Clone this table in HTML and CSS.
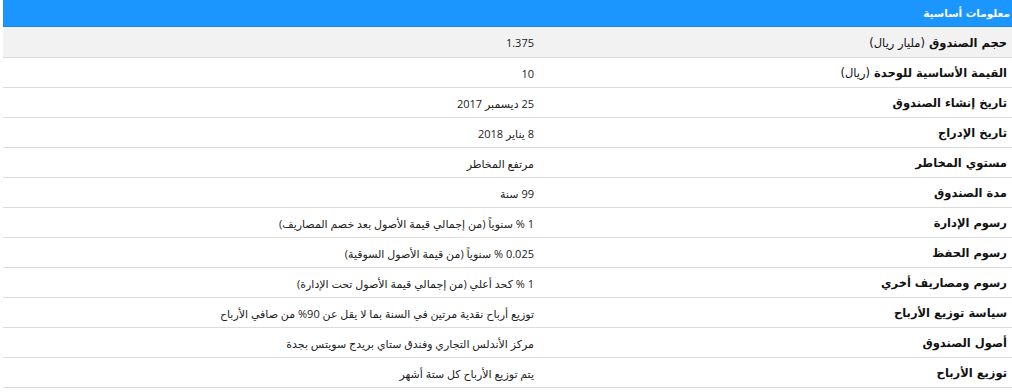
FILE: index.html
```html
<!DOCTYPE html>
<html lang="ar" dir="rtl">
<head>
<meta charset="utf-8">
<title>معلومات أساسية</title>
<link rel="stylesheet" href="styles.css">
</head>
<body>
<section class="panel">
  <h2 class="panel-title">معلومات أساسية</h2>
  <table class="info">
    <colgroup><col class="col-label"><col class="col-value"></colgroup>
    <tbody>
      <tr class="shaded"><th>حجم الصندوق <span class="unit">(مليار ريال)</span></th><td>1.375</td></tr>
      <tr><th>القيمة الأساسية للوحدة <span class="unit">(ريال)</span></th><td>10</td></tr>
      <tr><th>تاريخ إنشاء الصندوق</th><td>25 ديسمبر 2017</td></tr>
      <tr><th>تاريخ الإدراج</th><td>8 يناير 2018</td></tr>
      <tr><th>مستوي المخاطر</th><td>مرتفع المخاطر</td></tr>
      <tr><th>مدة الصندوق</th><td>99 سنة</td></tr>
      <tr><th>رسوم الإدارة</th><td>1 % سنوياً (من إجمالي قيمة الأصول بعد خصم المصاريف)</td></tr>
      <tr><th>رسوم الحفظ</th><td>0.025 % سنوياً (من قيمة الأصول السوقية)</td></tr>
      <tr><th>رسوم ومصاريف أخري</th><td>1 % كحد أعلي (من إجمالي قيمة الأصول تحت الإدارة)</td></tr>
      <tr><th>سياسة توزيع الأرباح</th><td>توزيع أرباح نقدية مرتين في السنة بما لا يقل عن 90% من صافي الأرباح</td></tr>
      <tr><th>أصول الصندوق</th><td>مركز الأندلس التجاري وفندق ستاي بريدج سويتس بجدة</td></tr>
      <tr><th>توزيع الأرباح</th><td>يتم توزيع الأرباح كل ستة أشهر</td></tr>
    </tbody>
  </table>
</section>
</body>
</html>
```

FILE: styles.css
```css
html, body {
  margin: 0;
  padding: 0;
  background: #ffffff;
}

.panel {
  width: 1009px;
  font-family: "DejaVu Sans", sans-serif;
}

.panel-title {
  margin: 0;
  height: 26px;
  line-height: 27px;
  padding: 0 2px 0 3px;
  background: #1b96fe;
  border-bottom: 1px solid #1a86e0;
  color: #ffffff;
  font-size: 10.5px;
  font-weight: bold;
  text-align: right;
}

.info {
  width: 100%;
  border-collapse: collapse;
  table-layout: fixed;
}

.col-label {
  width: 464px;
}

.info tr {
  height: 30px;
  border-bottom: 1px solid #dcdcdc;
}

.info tr.shaded {
  background: #f2f2f2;
}

.info th {
  padding: 2px 5px 0 0;
  text-align: right;
  font-size: 11.5px;
  font-weight: bold;
  color: #111;
}

.info th .unit {
  font-weight: normal;
}

.info td {
  padding: 2px 14px 0 0;
  text-align: right;
  font-family: "Open Sans", "DejaVu Sans", sans-serif;
  font-size: 11px;
  color: #222;
  white-space: nowrap;
}
```
